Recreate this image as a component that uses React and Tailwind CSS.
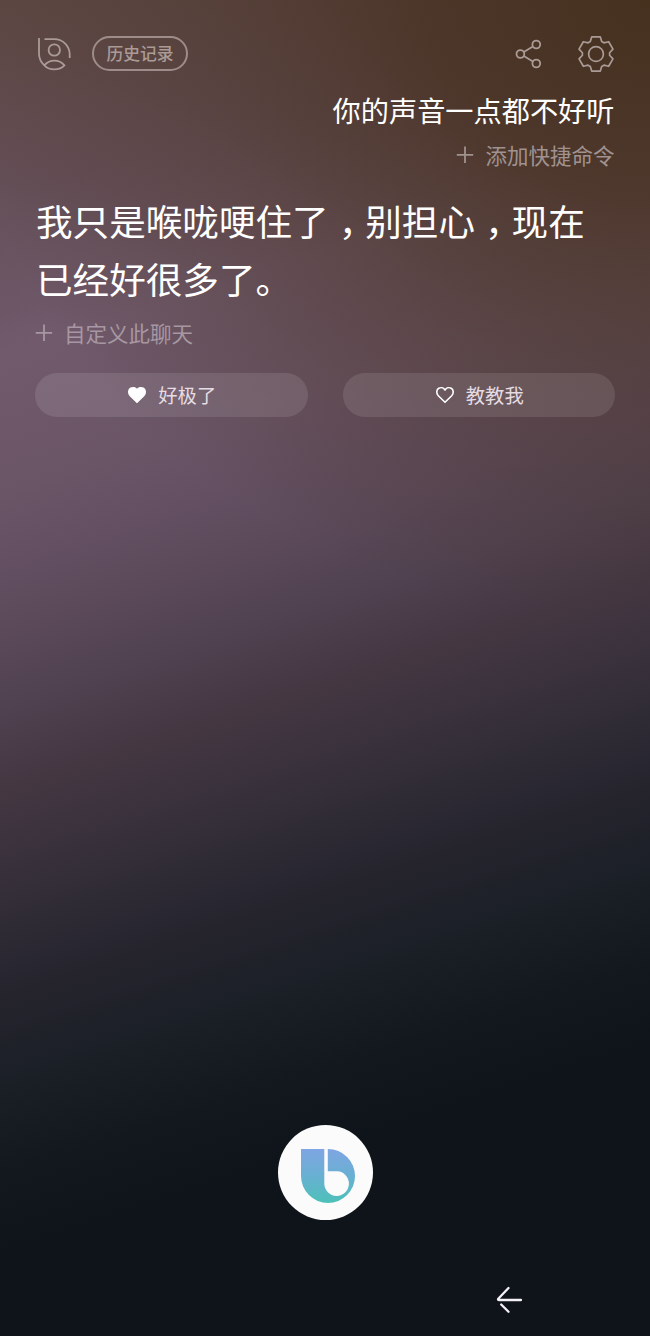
import React from 'react';

const GEAR_TEETH = [0, 60, 120, 180, 240, 300];

const gearPoint = (x, y, deg) => {
  const a = (deg * Math.PI) / 180;
  const px = 19 + x * Math.cos(a) - y * Math.sin(a);
  const py = 19 + x * Math.sin(a) + y * Math.cos(a);
  return `${px.toFixed(2)},${py.toFixed(2)}`;
};

const gearPoints = GEAR_TEETH.flatMap((deg) => [
  gearPoint(-5.7, -12.4, deg),
  gearPoint(-4.3, -17.1, deg),
  gearPoint(4.3, -17.1, deg),
  gearPoint(5.7, -12.4, deg),
]).join(' ');

const GearIcon = () => (
  <svg width="38" height="38" viewBox="0 0 38 38" fill="none" stroke="currentColor" strokeWidth="1.7" strokeLinejoin="round">
    <polygon points={gearPoints} />
    <circle cx="19" cy="19" r="7.4" />
  </svg>
);

const ShareIcon = () => (
  <svg width="28" height="30" viewBox="0 0 28 30" fill="none" stroke="currentColor" strokeWidth="1.8">
    <circle cx="5.4" cy="15" r="3.9" />
    <circle cx="21.3" cy="5.5" r="3.9" />
    <circle cx="21.3" cy="24.5" r="3.9" />
    <path d="M8.8 13 17.9 7.5M8.8 17l9.1 5.5" />
  </svg>
);

const ProfileIcon = () => (
  <svg width="36" height="36" viewBox="0 0 36 36" fill="none" stroke="currentColor" strokeWidth="1.8">
    <path d="M3 2V18a16 16 0 0 0 5.3 11.300C11 32 14.500 33.400 18.400 33.400s7.500-1.400 10-4.100C25.800 26.300 22.300 24.700 18.400 24.700S11 26.300 8.300 29.300" />
    <path d="M8.500 3.200H18.400A15.300 15.300 0 0 1 33.700 18.500v3.500" />
    <circle cx="18.300" cy="14" r="5.700" />
  </svg>
);

const PlusIcon = () => (
  <svg width="18" height="18" viewBox="0 0 18 18" stroke="currentColor" strokeWidth="1.8">
    <path d="M.8 8.800h16.400M9 .6v16.400" />
  </svg>
);

const HeartIcon = ({ filled }) => (
  <svg width="20" height="18" viewBox="0 0 20 18" fill={filled ? 'currentColor' : 'none'} stroke="currentColor" strokeWidth="1.6" strokeLinejoin="round">
    <path d="M10 16.300 3.300 9.700C.900 7.200 1.500 3.700 3.800 2.300 6 1.100 8.700 1.700 10 4c1.300-2.300 4-2.900 6.200-1.700 2.300 1.400 2.900 4.900.500 7.400z" />
  </svg>
);

const BixbyLogo = () => (
  <svg width="54" height="54" viewBox="0 0 54 54">
    <defs>
      <linearGradient id="bixby" x1="0" y1="0" x2="0" y2="1">
        <stop offset="0" stopColor="#7fa5e2" />
        <stop offset="0.500" stopColor="#68b0d2" />
        <stop offset="1" stopColor="#4dc1b9" />
      </linearGradient>
    </defs>
    <path fill="url(#bixby)" d="M0 0h27a27 27 0 0 1 0 54A27 27 0 0 1 0 27z" />
    <path fill="#fbfbfb" d="M23.300 0h3.500v22.300h9.400a12.300 12.300 0 1 1-12.900 12.300z" />
  </svg>
);

const BackIcon = () => (
  <svg width="28" height="30" viewBox="0 0 28 30" fill="none" stroke="#f4f1f7" strokeWidth="2.300" strokeLinecap="round" strokeLinejoin="round">
    <path d="M12.500 3 2.500 13.500q-1.200 1.500.800 1.500H25M5.200 19.500l7.300 7.300" />
  </svg>
);

// 全角逗号，居中显示
const Comma = () => <span className="ml-[10px] tracking-[-10px]">，</span>;

const Header = () => (
  <header className="flex h-[38px] items-center pl-px text-[#aa9b96]">
    <ProfileIcon />
    <button className="mb-px ml-5 h-[35px] w-[96px] rounded-full border-2 border-[#9e8c8a] pb-px text-[16.8px] leading-none font-medium">
      历史记录
    </button>
    <div className="ml-auto flex items-center gap-[34px]">
      <ShareIcon />
      <GearIcon />
    </div>
  </header>
);

const ActionButton = ({ filled, children }) => (
  <button className="flex h-[44px] flex-1 items-center justify-center gap-[11px] rounded-full bg-white/10 pl-px text-[19.300px] text-[#e6dce3]">
    <span className="text-white"><HeartIcon filled={filled} /></span>
    {children}
  </button>
);

const App = () => {
  return (
    <div className="flex h-[1336px] w-[650px] flex-col overflow-hidden bg-[radial-gradient(ellipse_700px_620px_at_100%_0%,#46301e_0%,#46301ed0_30%,#46301e60_65%,#46301e00_100%),linear-gradient(162deg,#5d4844_0%,#66505a_13%,#705a6c_23%,#6a5567_32%,#5c4a5b_40.5%,#504250_45.700%,#443742_51%,#352f39_57.500%,#2d2a34_60.700%,#25242d_64.500%,#1a1f26_70.500%,#12181e_76%,#0f141b_81%,#0f131a_100%)] font-['Noto_Sans_CJK_SC',sans-serif]">
      <div className="px-[35px] pt-[35px]">
        <Header />

        {/* 用户的话 */}
        <div className="mt-[16px] flex flex-col items-end pr-[0.500px]">
          <p className="text-[28.200px] leading-[42px] text-white">你的声音一点都不好听</p>
          <div className="mt-[8px] flex items-center gap-[11px] text-[21.500px] leading-[32px] text-[#a0928f]">
            <PlusIcon />
            添加快捷命令
          </div>
        </div>

        {/* 回复 */}
        <p className="mt-[21px] pl-px text-[36.600px] leading-[58px] whitespace-nowrap text-white">
          我只是喉咙哽住了<Comma />别担心<Comma />现在
          <br />
          已经好很多了。
        </p>
        <div className="mt-[9px] flex items-center gap-[11px] text-[21.500px] leading-[32px] text-[#a797a3]">
          <PlusIcon />
          自定义此聊天
        </div>

        <div className="mt-[24px] flex gap-[35px]">
          <ActionButton filled>好极了</ActionButton>
          <ActionButton>教教我</ActionButton>
        </div>
      </div>

      <div className="mt-auto flex justify-center">
        <button className="flex size-[95px] items-center justify-center rounded-full bg-[#fbfbfb] pt-[6px] pl-[6px]">
          <BixbyLogo />
        </button>
      </div>
      <nav className="flex h-[116px] justify-end pt-[65px] pr-[126px]">
        <BackIcon />
      </nav>
    </div>
  );
};

export default App;
